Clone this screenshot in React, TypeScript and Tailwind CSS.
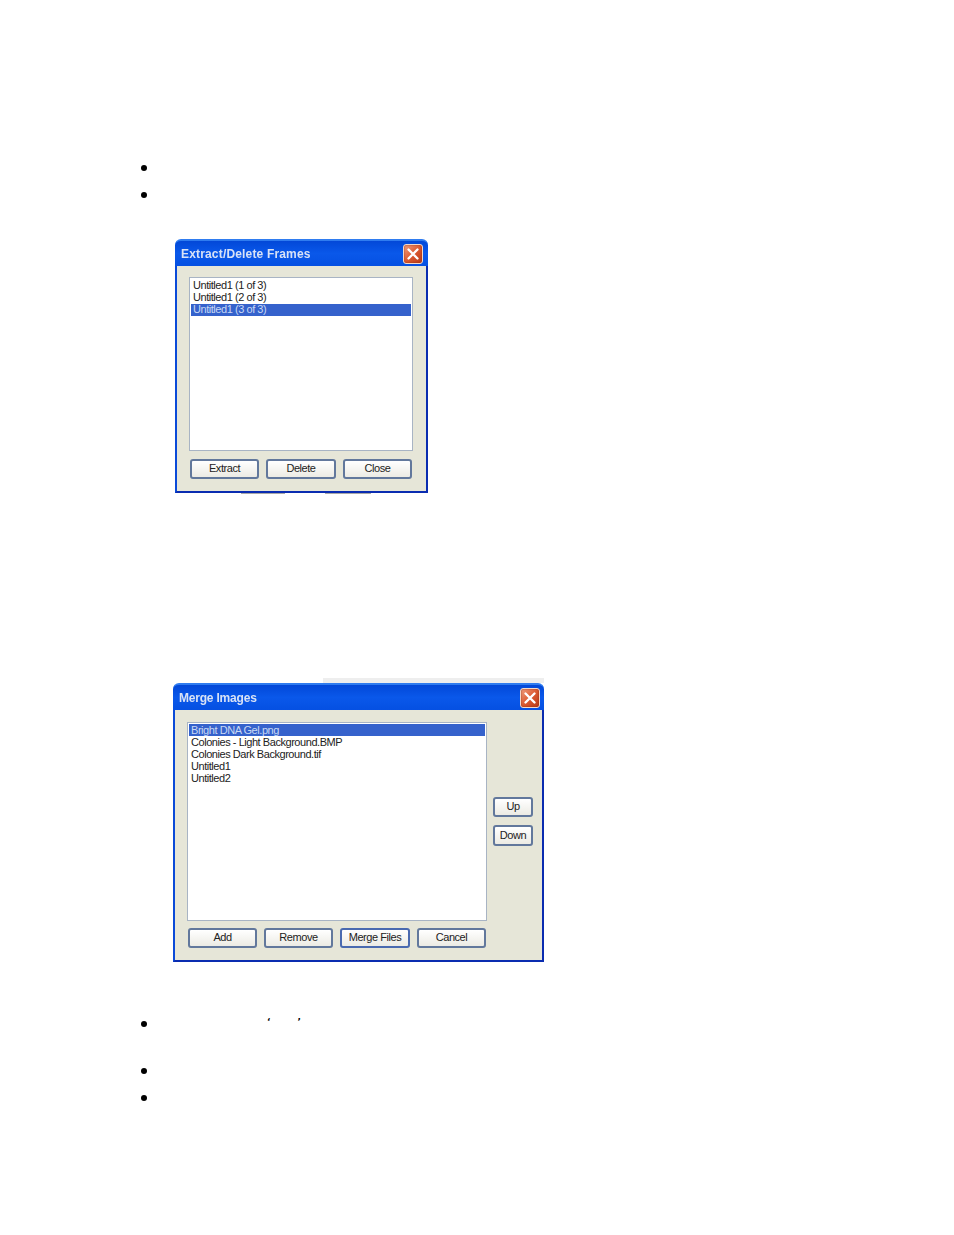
import React from "react";

const font = "font-['Liberation_Sans',Arial,sans-serif]";

function Bullet({ className = "" }: { className?: string }) {
  return <div className={`w-[6px] h-[6px] rounded-full bg-black ${className}`} />;
}

function CloseBox() {
  return (
    <div className="w-[20px] h-[20px] rounded-[3px] border border-[#f4d8c8] bg-gradient-to-br from-[#f0a080] via-[#dc5a30] to-[#b83a18] flex items-center justify-center shadow-[inset_0_0_2px_#8a2a10]">
      <svg width="14" height="14" viewBox="0 0 14 14">
        <path d="M2.5 2.5 L11.5 11.5 M11.5 2.5 L2.5 11.5" stroke="#fff" strokeWidth="2.4" strokeLinecap="round" />
      </svg>
    </div>
  );
}

function XpButton({ label, className = "", strong = false }: { label: string; className?: string; strong?: boolean }) {
  return (
    <div
      className={`flex items-center justify-center rounded-[3px] border-2 pb-[1px] ${
        strong ? "border-[#4a6ab0]" : "border-[#62789c]"
      } bg-gradient-to-b from-white to-[#ecebe4] text-[11px] tracking-[-0.45px] text-[#222] ${className}`}
    >
      {label}
    </div>
  );
}

function TitleBar({ title, pr, tracking }: { title: string; pr: string; tracking: string }) {
  return (
    <div
      className={`h-[27px] rounded-t-[6px] border-t-2 border-[#2f7cf0] bg-gradient-to-b from-[#0348d8] via-[#0a58ea] to-[#0550e2] flex items-center justify-between pl-[6px] ${pr}`}
    >
      <span className={`text-[12px] pt-[1px] font-bold text-[#d8e2f6] ${tracking}`}>{title}</span>
      <CloseBox />
    </div>
  );
}

function Row({ text, selected = false, leading = "leading-[11px]" }: { text: string; selected?: boolean; leading?: string }) {
  return (
    <div
      className={`h-[12px] ${leading} pl-[2px] text-[11px] tracking-[-0.45px] whitespace-pre ${
        selected ? "bg-[#3562cc] text-[#c8d8f4]" : "text-[#222]"
      }`}
    >
      {text}
    </div>
  );
}

export default function App() {
  return (
    <div className={`w-[954px] h-[1235px] bg-white overflow-hidden ${font}`}>
      <div className="pt-[165px] pl-[141px]">
        <Bullet />
        <Bullet className="mt-[21px]" />
      </div>

      {/* Extract/Delete Frames */}
      <div className="mt-[41px] ml-[175px] w-[253px] h-[254px] flex flex-col blur-[0.6px]">
        <TitleBar title="Extract/Delete Frames" pr="pr-[5px]" tracking="tracking-[0.17px]" />
        <div className="flex-1 bg-[#e6e6d8] border-l-2 border-r-2 border-b-2 border-l-[#0a4ad8] border-r-[#0a2cb0] border-b-[#0a2cb0] pl-[12px] pr-[13px] pt-[11px]">
          <div className="h-[174px] bg-white border border-[#a8b4c4] p-[1px] pt-[2px]">
            <Row text="Untitled1 (1 of 3)" />
            <Row text="Untitled1 (2 of 3)" />
            <Row text="Untitled1 (3 of 3)" selected />
          </div>
          <div className="mt-[8px] pl-[1px] flex gap-[7px]">
            <XpButton label="Extract" className="w-[69px] h-[20px]" />
            <XpButton label="Delete" className="w-[70px] h-[20px]" />
            <XpButton label="Close" className="w-[69px] h-[20px]" />
          </div>
        </div>
      </div>

      {/* faint smudges under the first dialog */}
      <div className="ml-[241px] h-[2px] flex gap-[40px] blur-[0.5px]">
        <div className="w-[44px] h-[1px] bg-[#a8a8a8]" />
        <div className="w-[46px] h-[1px] bg-[#a8a8a8]" />
      </div>

      {/* faint strip above the second dialog */}
      <div className="mt-[183px] ml-[323px] w-[221px] h-[5px] bg-[#eeeeee]" />

      {/* Merge Images */}
      <div className="ml-[173px] w-[371px] h-[279px] flex flex-col blur-[0.6px]">
        <TitleBar title="Merge Images" pr="pr-[4px]" tracking="tracking-[-0.2px]" />
        <div className="flex-1 bg-[#e6e6d8] border-l-2 border-r-2 border-b-2 border-l-[#0a4ad8] border-r-[#0a2cb0] border-b-[#0a2cb0] pl-[12px] pt-[12px]">
          <div className="flex">
            <div className="w-[300px] h-[199px] bg-white border border-[#a8b4c4] p-[1px]">
              <Row text="Bright DNA Gel.png" selected leading="leading-[12px]" />
              <Row text="Colonies - Light Background.BMP" leading="leading-[12px]" />
              <Row text="Colonies Dark Background.tif" leading="leading-[12px]" />
              <Row text="Untitled1" leading="leading-[12px]" />
              <Row text="Untitled2" leading="leading-[12px]" />
            </div>
            <div className="ml-[6px] pt-[75px] flex flex-col gap-[8px]">
              <XpButton label="Up" className="w-[40px] h-[20px]" />
              <XpButton label="Down" className="w-[40px] h-[21px]" />
            </div>
          </div>
          <div className="mt-[7px] pl-[1px] flex gap-[7px]">
            <XpButton label="Add" className="w-[69px] h-[20px]" />
            <XpButton label="Remove" className="w-[69px] h-[20px]" />
            <XpButton label="Merge Files" className="w-[70px] h-[20px]" strong />
            <XpButton label="Cancel" className="w-[69px] h-[20px]" />
          </div>
        </div>
      </div>

      <div className="mt-[51px] pl-[141px] flex items-start">
        <Bullet className="mt-[8px]" />
        <div className="ml-[120px] mt-[3px] flex gap-[27px] font-['DejaVu_Sans',sans-serif] font-bold text-[9px] leading-[12px] text-black">
          <span>‘</span>
          <span>’</span>
        </div>
      </div>
      <div className="pl-[141px]">
        <Bullet className="mt-[40px]" />
        <Bullet className="mt-[21px]" />
      </div>
    </div>
  );
}
